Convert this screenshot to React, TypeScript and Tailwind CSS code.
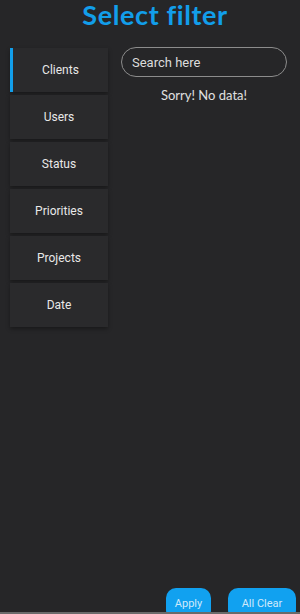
const tabs = ['Clients', 'Users', 'Status', 'Priorities', 'Projects', 'Date'];

export default function App() {
    return (
        <div className="h-[614px] w-[300px] overflow-hidden bg-[#262628] flex flex-col" style={{fontFamily: 'Roboto, sans-serif'}}>
            <h1 className="h-[30px] pl-[10px] text-center text-[27px] leading-[30px] font-bold text-[#129eea] tracking-[0.6px]"
                style={{fontFamily: 'Lato, sans-serif'}}>
                Select filter
            </h1>
            <div className="flex mt-[18px]">
                <div className="ml-[10px] w-[98px] flex flex-col gap-[3px]">
                    {tabs.map((tab, i) => (
                        <div key={tab}
                             className={`h-[44px] flex items-center justify-center bg-[#2a2a2c] shadow-[0_2px_4px_rgba(0,0,0,0.35)] text-[12px] text-[#e8e8e8] ${i === 0 ? 'border-l-[3px] border-[#129eea]' : ''}`}>
                            {tab}
                        </div>
                    ))}
                </div>
                <div className="flex-1 flex flex-col items-center pl-[13px] pr-[13px] -mt-[1px]">
                    <input placeholder="Search here"
                           className="w-full h-[30px] rounded-full border border-[#8c8c8c] bg-transparent px-[10px] text-[13px] text-[#ddd] placeholder:text-[#dcdcdc] outline-none"/>
                    <p className="mt-[9px] text-[13px] text-[#e0e0e0]" style={{fontFamily: 'Lato, sans-serif'}}>
                        Sorry! No data!
                    </p>
                </div>
            </div>
            <div className="mt-auto h-[24px] overflow-hidden flex justify-end gap-[17px] pr-[4px]">
                <button className="w-[45px] h-[32px] shrink-0 rounded-[10px] bg-[#11a1f0] text-[11px] text-[#cfe9fb]">Apply</button>
                <button className="w-[68px] h-[32px] shrink-0 rounded-[10px] bg-[#11a1f0] text-[11px] text-[#cfe9fb]">All Clear</button>
            </div>
            <div className="h-[2px] bg-[#6a6a6a]"/>
        </div>
    );
}
